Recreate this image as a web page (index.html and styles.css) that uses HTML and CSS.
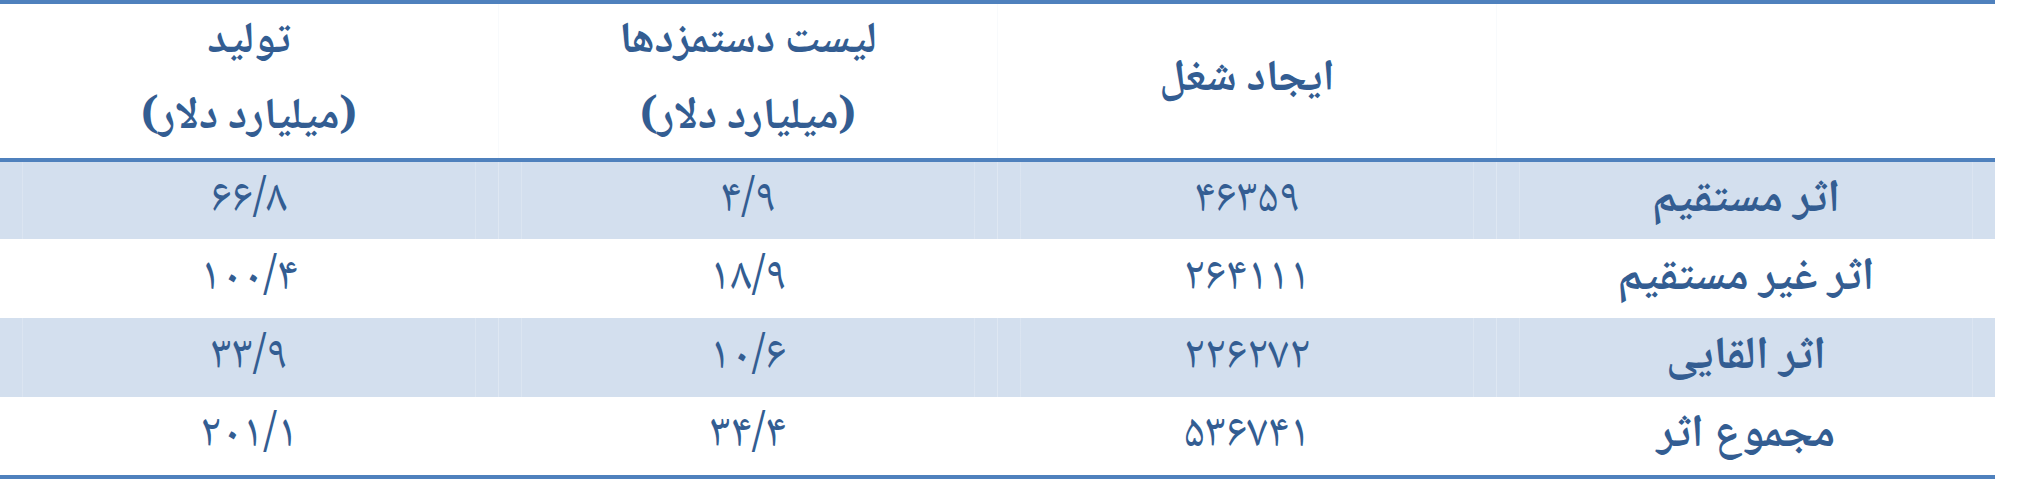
FILE: index.html
```html
<!DOCTYPE html>
<html lang="fa">
<head>
<meta charset="utf-8">
<title>جدول اثرات</title>
<link rel="stylesheet" href="styles.css">
</head>
<body>
<table class="impact">
  <thead>
    <tr>
      <th class="col"></th>
      <th class="col"><span class="h1">ایجاد شغل</span></th>
      <th class="col"><span class="h1">لیست دستمزدها</span><span class="h2">(میلیارد دلار)</span></th>
      <th class="col"><span class="h1">تولید</span><span class="h2">(میلیارد دلار)</span></th>
    </tr>
  </thead>
  <tbody>
    <tr class="band">
      <th>اثر مستقیم</th><td>۴۶۳۵۹</td><td>۴/۹</td><td>۶۶/۸</td>
    </tr>
    <tr>
      <th>اثر غیر مستقیم</th><td>۲۶۴۱۱۱</td><td>۱۸/۹</td><td>۱۰۰/۴</td>
    </tr>
    <tr class="band">
      <th>اثر القایی</th><td>۲۲۶۲۷۲</td><td>۱۰/۶</td><td>۳۳/۹</td>
    </tr>
    <tr>
      <th>مجموع اثر</th><td>۵۳۶۷۴۱</td><td>۳۴/۴</td><td>۲۰۱/۱</td>
    </tr>
  </tbody>
</table>
</body>
</html>
```

FILE: styles.css
```css
html, body {
  margin: 0;
  padding: 0;
  background: #ffffff;
}

.impact {
  width: 1995px;
  margin: 0;
  border-collapse: collapse;
  table-layout: fixed;
  direction: rtl;
  color: #335d92;
  font-family: "Noto Naskh Arabic", "Noto Sans Arabic", "DejaVu Sans", sans-serif;
  border-top: 4px solid #4f81bd;
  border-bottom: 4px solid #4f81bd;
}

.impact thead tr {
  height: 158px;
}

.impact thead th {
  border-bottom: 4px solid #4f81bd;
  font-weight: bold;
  font-size: 44px;
  text-align: center;
  vertical-align: middle;
  padding: 0;
}

.impact thead th + th {
  border-right: 1px solid rgba(79, 129, 189, 0.04);
}

.impact .col {
  width: 25%;
}

.h1, .h2 {
  display: block;
  line-height: 76px;
}

.impact tbody tr {
  height: 79px;
}

.impact tbody tr:last-child {
  height: 80px;
}

.impact tbody th {
  font-weight: bold;
  font-size: 46px;
  line-height: 62px;
  text-align: center;
  padding: 0;
}

.impact tbody td {
  font-size: 47px;
  line-height: 62px;
  font-weight: normal;
  text-align: center;
  padding: 0;
}

.impact tbody th,
.impact tbody td {
  border-left: 1px solid rgba(255, 255, 255, 0.25);
}

.impact tbody td:last-child {
  border-left: none;
}

.band {
  background: #d3dfee;
}

.band th,
.band td {
  background-image:
    linear-gradient(rgba(255, 255, 255, 0.18), rgba(255, 255, 255, 0.18)),
    linear-gradient(rgba(255, 255, 255, 0.18), rgba(255, 255, 255, 0.18));
  background-size: 1px 100%, 1px 100%;
  background-position: 22px 0, calc(100% - 22px) 0;
  background-repeat: no-repeat;
}
```
